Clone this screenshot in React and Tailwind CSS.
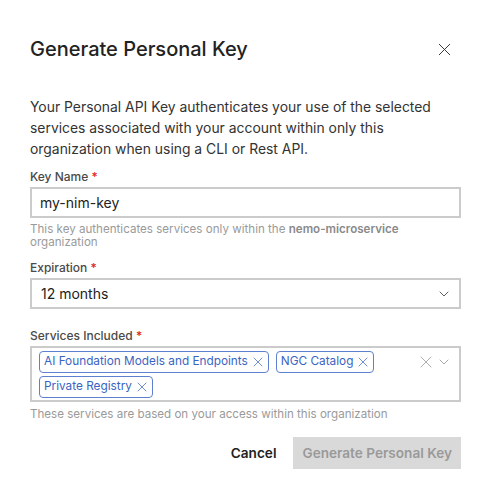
import { X, ChevronDown } from "lucide-react";

const services = [
  "AI Foundation Models and Endpoints",
  "NGC Catalog",
  "Private Registry",
];

const Label = ({ children }) => (
  <label className="block text-[12px] font-medium text-[#4a4a4a] leading-4 mb-[2px]">
    {children} <span className="text-[#e02424]">*</span>
  </label>
);

const Chip = ({ name }) => (
  <span className="inline-flex items-center gap-[2px] h-[22px] pl-[4px] pr-[2px] border border-[#5d80cf] rounded-[4px] text-[11.8px] text-[#3a64c2] leading-none">
    {name}
    <X size={16} strokeWidth={1.1} />
  </span>
);

export default function App() {
  return (
    <div
      className="w-[491px] h-[497px] bg-white text-[#1a1a1a] px-[30px] pt-[37px]"
      style={{ fontFamily: "Inter, 'Noto Sans', sans-serif" }}
    >
      {/* Header */}
      <div className="flex items-center justify-between">
        <h1 className="text-[20px] font-medium leading-6 text-[#222]">Generate Personal Key</h1>
        <button className="text-[#333] mr-[6px]">
          <X size={21} strokeWidth={1.1} />
        </button>
      </div>

      <p className="mt-[36px] text-[13.9px] leading-[21px] text-[#333]">
        Your Personal API Key authenticates your use of the selected services
        associated with your account within only this organization when using a
        CLI or Rest API.
      </p>

      {/* Key name */}
      <div className="mt-[9px]">
        <Label>Key Name</Label>
        <input
          defaultValue="my-nim-key"
          className="block w-full h-[31px] border-2 border-[#cbcbcb] px-[8px] text-[14px] text-[#222] outline-none"
        />
        <p className="mt-[5px] text-[11.6px] leading-[12.5px] text-[#9a9a9a]">
          This key authenticates services only within the{" "}
          <span className="font-semibold text-[#8a8a8a]">nemo-microservice</span>{" "}
          organization
        </p>
      </div>

      {/* Expiration */}
      <div className="mt-[12px]">
        <Label>Expiration</Label>
        <div className="flex items-center justify-between h-[31px] border-2 border-[#cbcbcb] pl-[9px] pr-[7px] text-[14px] text-[#222]">
          <span>12 months</span>
          <ChevronDown size={16} strokeWidth={1.3} className="text-[#444]" />
        </div>
      </div>

      {/* Services */}
      <div className="mt-[19px]">
        <Label>Services Included</Label>
        <div className="flex items-start h-[56px] border-2 border-[#cbcbcb] pl-[7px] pr-[7px] pt-[3px]">
          <div className="flex flex-wrap gap-x-[7px] gap-y-[3px] w-[350px]">
            {services.map((s) => (
              <Chip key={s} name={s} />
            ))}
          </div>
          <div className="ml-auto flex items-center mt-[1px] text-[#9a9a9a]">
            <X size={20} strokeWidth={1} />
            <ChevronDown size={16} strokeWidth={1.3} />
          </div>
        </div>
        <p className="mt-[6px] text-[11.6px] leading-[12px] text-[#9a9a9a]">
          These services are based on your access within this organization
        </p>
      </div>

      {/* Footer */}
      <div className="mt-[17px] flex items-center justify-end gap-[17px]">
        <button className="text-[13.6px] font-semibold text-[#222]">Cancel</button>
        <button className="h-[32px] px-[9px] bg-[#d9d9d9] text-[13.6px] font-semibold text-[#999]">
          Generate Personal Key
        </button>
      </div>
    </div>
  );
}
